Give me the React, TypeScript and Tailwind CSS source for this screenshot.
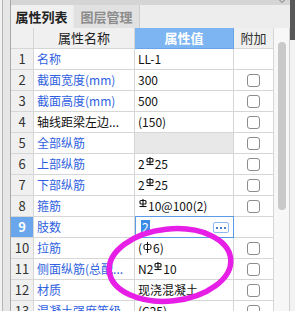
import React from 'react'

const FONT = { fontFamily: '"Microsoft YaHei", "Noto Sans CJK SC", "Noto Sans", sans-serif' }

// grade III rebar glyph
function G3() {
  return (
    <svg width="8" height="10" viewBox="0 0 8 10" className="inline-block -mt-[4px] mx-[1px]" fill="none" stroke="#111" strokeWidth="1.1">
      <rect x="1" y="1.5" width="6" height="3.5" rx="1" />
      <line x1="4" y1="0" x2="4" y2="7" />
      <line x1="0.5" y1="7.5" x2="7.5" y2="7.5" />
    </svg>
  )
}

// grade I rebar glyph
function G1() {
  return (
    <svg width="9" height="11" viewBox="0 0 9 11" className="inline-block -mt-[2px] mx-[1px]" fill="none" stroke="#111" strokeWidth="1">
      <rect x="1" y="2.5" width="7" height="5" rx="1.5" />
      <line x1="4.5" y1="0" x2="4.5" y2="11" />
    </svg>
  )
}

type Row = { name: string; value: React.ReactNode; black?: boolean; group?: boolean; check: boolean }

const ROWS: Row[] = [
  { name: '名称', value: 'LL-1', check: false },
  { name: '截面宽度(mm)', value: '300', check: true },
  { name: '截面高度(mm)', value: '500', check: true },
  { name: '轴线距梁左边...', value: '(150)', black: true, check: true },
  { name: '全部纵筋', value: '', group: true, check: true },
  { name: '上部纵筋', value: <>2<G3 />25</>, check: true },
  { name: '下部纵筋', value: <>2<G3 />25</>, check: true },
  { name: '箍筋', value: <><G3 />10@100(2)</>, check: true },
  { name: '肢数', value: null, check: false },
  { name: '拉筋', value: <>(<G1 />6)</>, check: true },
  { name: '侧面纵筋(总配...', value: <>N2<G3 />10</>, check: true },
  { name: '材质', value: '现浇混凝土', check: true },
  { name: '混凝土强度等级', value: '(C25)', check: true },
]

function Check() {
  return <div className="w-[13px] h-[13px] rounded-[3px] border border-[#8c8c8c] bg-white" />
}

export default function App() {
  return (
    <div className="relative w-[295px] h-[311px] overflow-hidden flex bg-[#f0f0f0] text-[12px]" style={FONT}>
      {/* left edge */}
      <div className="w-[10px] flex shrink-0">
        <div className="w-[2px] bg-[#f2f2f2]" />
        <div className="w-[1px] bg-[#b4b4b4]" />
        <div className="flex-1 bg-[#e6e6e6]" />
      </div>

      {/* panel */}
      <div className="w-[280px] shrink-0 flex flex-col border-l border-[#a8a8a8]">
        <div className="h-[5px] bg-[#d5d5d5] relative">
          <svg className="absolute right-[5px] top-0" width="6" height="3" viewBox="0 0 6 3" fill="none" stroke="#777" strokeWidth="1">
            <path d="M0.5 0 L3 2.5 L5.5 0" />
          </svg>
        </div>
        <div className="h-[23px] flex items-stretch bg-[#ededed]">
          <div className="w-[61px] flex items-center justify-center font-bold text-[13px] text-[#222] bg-[#f0f0f0]">属性列表</div>
          <div className="w-[2px]" />
          <div className="w-[66px] flex items-center justify-center font-bold text-[13px] text-[#8c8c8c] bg-[#e1e1e1] border-r border-[#cfcfcf]">图层管理</div>
        </div>

        <div className="flex flex-1 min-h-0">
          <div className="w-[263px] shrink-0">
            <div className="grid grid-cols-[23px_101px_99px_40px] auto-rows-[21px]">
              {/* header */}
              <div className="border-r border-b border-[#d6d6d6] bg-[#f0f0f0]" />
              <div className="border-r border-b border-[#d6d6d6] bg-[#f0f0f0] flex items-center justify-center text-[13px] text-[#222]">属性名称</div>
              <div className="border-r border-b border-[#6aa3e6] bg-[#7db5f3] flex items-center justify-center text-[13px] font-bold text-white">属性值</div>
              <div className="border-r border-b border-[#d6d6d6] bg-[#f0f0f0] flex items-center justify-center text-[13px] text-[#333]">附加</div>

              {ROWS.map((r, i) => {
                const sel = i === 8
                return (
                  <React.Fragment key={i}>
                    <div className={`border-r border-b border-[#d6d6d6] flex items-center justify-center text-[13px] ${sel ? 'bg-[#6aa6ec] text-white font-bold' : 'bg-[#f0f0f0] text-[#333]'}`}>{i + 1}</div>
                    <div className={`border-r border-b border-[#d6d6d6] bg-white flex items-center pl-[3px] whitespace-nowrap overflow-hidden ${r.black ? 'text-[#111]' : 'text-[#2f5fe0]'}`}>{r.name}</div>
                    {sel ? (
                      <div className="relative -mt-[1px] h-[22px] border border-[#5a9ae6] bg-white flex items-center pl-[5px]">
                        <span className="bg-[#3b8ce6] text-white leading-[14px] px-[1px]">2</span>
                        <div className="absolute right-[4px] top-[5px] w-[16px] h-[11px] rounded-[2px] border border-[#8fbaf0] bg-white flex items-center justify-center gap-[2px]">
                          <span className="w-[2px] h-[2px] bg-[#4a7fc4]" />
                          <span className="w-[2px] h-[2px] bg-[#4a7fc4]" />
                          <span className="w-[2px] h-[2px] bg-[#4a7fc4]" />
                        </div>
                      </div>
                    ) : (
                      <div className={`border-r border-b border-[#d6d6d6] flex items-center pl-[3px] text-[#111] whitespace-nowrap ${r.group ? 'bg-[#e8e8e8]' : 'bg-white'}`}>{r.value}</div>
                    )}
                    <div className="border-r border-b border-[#d6d6d6] bg-white flex items-center justify-center">{r.check && <Check />}</div>
                  </React.Fragment>
                )
              })}
            </div>
          </div>

          {/* scrollbar */}
          <div className="w-[16px] shrink-0 bg-[#f7f7f7] border-r border-[#d0d0d0] pt-[14px] flex justify-center">
            <div className="w-[8px] h-[168px] rounded-full bg-[#c9c9c9]" />
          </div>
        </div>
      </div>

      {/* right edge */}
      <div className="w-[5px] shrink-0 flex flex-col">
        <div className="h-[40px] bg-[#575757]" />
        <div className="flex-1 bg-[#f2f2f2]" />
      </div>

      {/* annotation */}
      <svg className="absolute inset-0 pointer-events-none" width="295" height="311">
        <ellipse cx="170" cy="265" rx="61" ry="36" fill="none" stroke="#e61ee6" strokeWidth="5.5" transform="rotate(-6 170 265)" />
      </svg>
    </div>
  )
}
